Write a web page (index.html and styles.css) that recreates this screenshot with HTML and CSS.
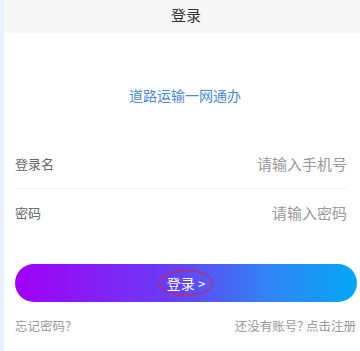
FILE: index.html
```
<!DOCTYPE html>
<html lang="zh">
<head>
<meta charset="utf-8">
<link rel="stylesheet" href="styles.css">
</head>
<body>
<div class="page">
  <div class="edge"></div>
  <div class="main">
    <header class="bar">登录</header>
    <div class="slogan">道路运输一网通办</div>
    <div class="form">
      <div class="row"><span class="label">登录名</span><span class="ph">请输入手机号</span></div>
      <div class="row"><span class="label">密码</span><span class="ph">请输入密码</span></div>
    </div>
    <div class="btnwrap">
      <div class="btn"><span class="btntext">登录 <span class="chev">&gt;</span></span></div>
    </div>
    <div class="links">
      <span>忘记密码?</span>
      <span>还没有账号? 点击注册</span>
    </div>
  </div>
</div>
</body>
</html>
```
FILE: styles.css
```
html, body { margin: 0; padding: 0; background: #fff; }
body { width: 360px; height: 351px; overflow: hidden; font-family: "Noto Sans CJK SC", "Noto Sans", sans-serif; }
.page { display: flex; height: 351px; }
.edge { width: 4px; background: #e8f1fc; flex: none; }
.main { flex: 1; display: flex; flex-direction: column; }
.bar { height: 33px; background: #f7f7f7; text-align: center; font-size: 15px; line-height: 29px; color: #333; padding-left: 8px; }
.slogan { margin-top: 52px; text-align: center; font-size: 14px; color: #4b8ad6; line-height: 20px; padding-left: 6px; }
.form { margin-top: 35px; padding: 0 13px 0 11px; }
.row { display: flex; justify-content: space-between; align-items: center; height: 46px; }
.row + .row { border-top: 1px solid #f2f2f2; margin-top: 2px; }
.label { color: #666; font-size: 13px; }
.ph { color: #999; font-size: 15px; }
.btnwrap { margin-top: 29px; padding: 0 3px 0 11px; }
.btn { height: 38px; border-radius: 19px; background: linear-gradient(90deg, #a200f6 0%, #6a3cf5 45%, #2f86f5 75%, #04a8f5 100%); display: flex; align-items: center; justify-content: center; }
.btntext { color: #fff; font-size: 14px; padding: 2px 7px; border: 1.5px solid #d9243a; border-radius: 50%; }
.chev { font-size: 13px; }
.links { display: flex; justify-content: space-between; padding: 0 4px 0 11px; margin-top: 14px; font-size: 12.5px; color: #999; }
```
